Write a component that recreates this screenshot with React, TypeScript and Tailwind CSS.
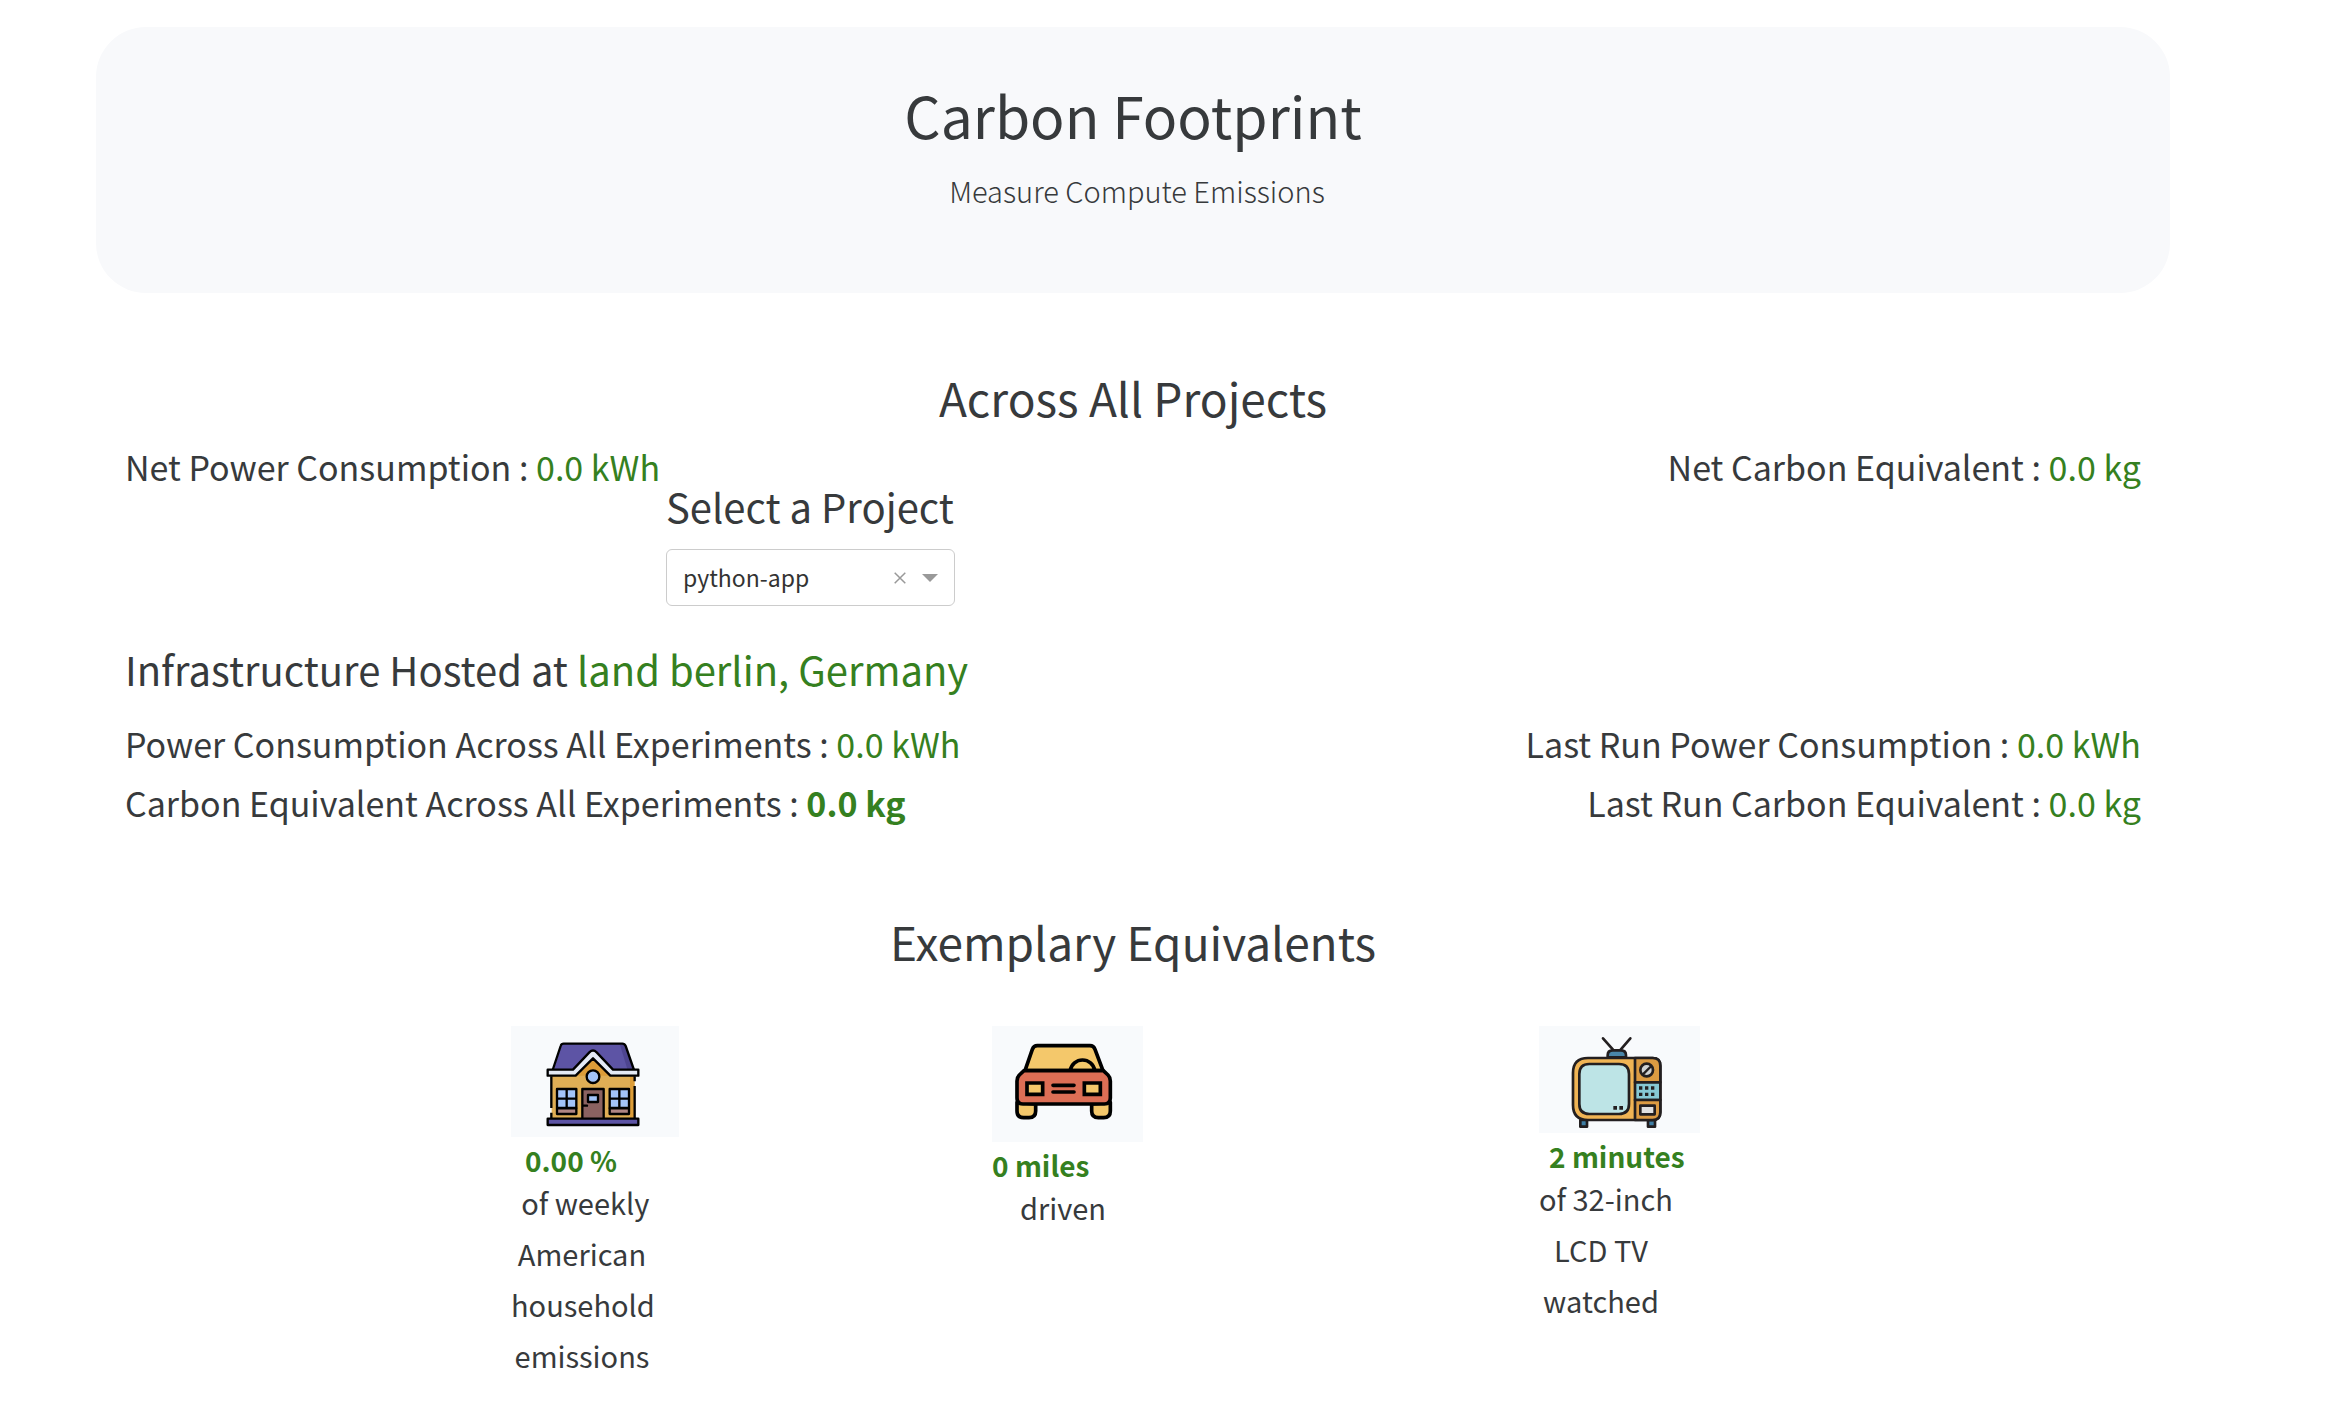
import { useState, type ReactNode } from "react";

function House() {
  return (
    <svg viewBox="33 33 504 333" className="block h-[111px] w-[168px] bg-[#f8fafc]" role="img" aria-label="House">
      <g stroke="#000" strokeWidth="7" strokeLinejoin="round" strokeLinecap="butt">
        <path d="M155 180H404V312H155Z" fill="#dfae55" stroke="none" />
        <path d="M390 184h13v126h-13z" fill="#dd9d38" stroke="none" />
        <path d="M160 165L184 92Q186 86 192 86H366Q373 86 375 92L402 165H335L279 107L223 165Z" fill="#5d54a5" stroke="none" />
        <path d="M360 90H372L398 162H382Z" fill="#4e4590" stroke="none" />
        <path d="M222 182L279 128L336 182Z" fill="#dd9d38" stroke="none" />
        <path d="M158 165L182 93Q184 86 191 86H367Q374 86 377 93L402 165" fill="none" />
        <path d="M143 164H219L268 112Q279 101 290 112L339 164H415V182H331L279 130L227 182H143Z" fill="#e4eaf5" />
        <path d="M154 184V279M154 293V311M404 184V199M404 213V311" fill="none" />
        <circle cx="279" cy="185" r="19" fill="#a3c4f9" />
        <path d="M247 311V222H311V311" fill="#8b6261" />
        <path d="M264 240H294V261H264Z" fill="#a3c4f9" />
        <path d="M250 272H261" strokeLinecap="round" />
        <path d="M171 222H229V279H171Z M329 222H387V279H329Z" fill="#a3c4f9" />
        <path d="M200 222V279M171 251H229M358 222V279M329 251H387" />
        <path d="M171 280H229V297H171Z M329 280H387V297H329Z" fill="#b08684" />
        <path d="M143 311H415V330H143Z" fill="#5d54a5" />
      </g>
    </svg>
  );
}

function Car() {
  return (
    <svg viewBox="36 33 453 348" className="block h-[116px] w-[151px] bg-[#f8fafc]" role="img" aria-label="Car">
      <g stroke="#000" strokeWidth="11" strokeLinejoin="round" strokeLinecap="round">
        <path d="M111 262V288Q111 308 131 308H147Q167 308 167 288V267Z" fill="#f4c86b" />
        <path d="M335 267V288Q335 308 355 308H371Q391 308 391 288V262Z" fill="#f4c86b" />
        <path d="M135 167L157 103Q161 92 172 92H330Q341 92 345 103L369 167Z" fill="#f4c86b" />
        <path d="M271 166A37 37 0 0 1 344 166" fill="none" />
        <path d="M132 167H370L384 180Q391 187 391 198V249Q391 267 373 267H129Q111 267 111 249V198Q111 187 118 180Z" fill="#dc6e55" />
        <path d="M141 204H188V238H141Z M313 204H361V238H313Z" fill="#f4c86b" strokeLinejoin="miter" />
        <path d="M219 211H282M219 231H282" fill="none" />
      </g>
    </svg>
  );
}

function Television() {
  return (
    <svg viewBox="57 33 483 321" className="block h-[107px] w-[161px] bg-[#f8fafc]" role="img" aria-label="Television">
      <g stroke="#231f20" strokeWidth="8" strokeLinejoin="round" strokeLinecap="round">
        <path d="M249 70L279 104M331 70L302 104" fill="none" />
        <path d="M263 127V121Q263 106 278 106H303Q318 106 318 121V127Z" fill="#4a86a8" />
        <path d="M181 315H201V335H181Z M384 315H405V335H384Z" fill="#3f7fa5" />
        <path d="M204 129H398Q421 129 421 152V292Q421 315 398 315H204Q159 315 159 270V174Q159 129 204 129Z" fill="#f0b454" />
        <path d="M345 129H398Q421 129 421 152V202H345Z" fill="#dc9b42" />
        <path d="M345 202H421V255H345Z" fill="#86c8d4" />
        <path d="M345 255H421V292Q421 315 398 315H345Z" fill="#dc9b42" />
        <path d="M208 147H297Q327 147 327 177V267Q327 297 297 297H208Q178 297 178 267V177Q178 147 208 147Z" fill="#bde4e6" />
        <circle cx="380" cy="165" r="19" fill="#d0d2d3" />
        <path d="M371 176L391 156" strokeWidth="7" />
        <path d="M361 272H404V298H361Z" fill="#e0e0e0" />
      </g>
      <path
        d="M280 273h11v11h-11zM298 273h11v11h-11zM357 214h10v10h-10zM375 214h10v10h-10zM393 214h10v10h-10zM357 233h10v10h-10zM375 233h10v10h-10zM393 233h10v10h-10z"
        fill="#231f20"
      />
    </svg>
  );
}

function Value({ children }: { children: ReactNode }) {
  return <span className="text-[#358020]">{children}</span>;
}

function Metric({ label, children }: { label: string; children: ReactNode }) {
  return (
    <p className="whitespace-nowrap text-[34px] leading-[59px]">
      {label} : {children}
    </p>
  );
}

function ProjectSelect() {
  const [project, setProject] = useState("python-app");
  return (
    <div className="mt-[45px] w-[289px]">
      <label htmlFor="project" className="block whitespace-nowrap text-[40px] leading-[48px]">
        Select a Project
      </label>
      <div className="mt-[19px] flex h-[57px] items-center rounded-md border border-[#cccccc] bg-white pr-4">
        <select
          id="project"
          value={project}
          onChange={(e) => setProject(e.target.value)}
          className="h-full min-w-0 flex-1 appearance-none bg-transparent pl-4 text-[23px] text-[#333333] outline-none"
        >
          <option value="">Select...</option>
          <option value="python-app">python-app</option>
        </select>
        <button type="button" aria-label="Clear project" onClick={() => setProject("")} className="mr-4">
          <svg viewBox="0 0 12 12" className="block size-3" stroke="#999999" strokeWidth="1.5" fill="none">
            <path d="M.7 .7L11.3 11.3M11.3 .7L.7 11.3" />
          </svg>
        </button>
        <svg viewBox="0 0 16 8" className="block h-2 w-4" fill="#999999" aria-hidden="true">
          <path d="M0 0H16L8 8Z" />
        </svg>
      </div>
    </div>
  );
}

function Equivalent({
  icon,
  value,
  indent = "",
  width = "w-[142px]",
  lines,
}: {
  icon: ReactNode;
  value: string;
  indent?: string;
  width?: string;
  lines: string[];
}) {
  return (
    <div>
      {icon}
      <strong className={`mt-[7px] block whitespace-nowrap text-[28px] leading-[33px] font-bold text-[#358020] ${indent}`}>
        {value}
      </strong>
      <p className={`text-center text-[29px] leading-[51px] ${width}`}>
        {lines.map((line) => (
          <span key={line} className="block whitespace-pre">
            {line}
          </span>
        ))}
      </p>
    </div>
  );
}

export default function App() {
  return (
    <main className="min-h-screen bg-white pt-[27px] pr-[156px] pl-24 font-['Noto_Sans_CJK_SC',sans-serif] text-[#373a3c]">
      <header className="rounded-[50px] bg-[#f8f9fb] pt-[52px] pb-[82px] text-center">
        <h1 className="text-[57px] leading-[70px]">Carbon Footprint</h1>
        <p className="mt-5 pl-2 text-[29px] leading-[42px] font-light">Measure Compute Emissions</p>
      </header>

      <section className="px-[29px]">
        <h2 className="mt-[74px] text-center text-[46px] leading-[60px]">Across All Projects</h2>
        <div className="mt-[10px] flex items-start">
          <div className="w-[541px] shrink-0">
            <Metric label="Net Power Consumption">
              <Value>0.0 kWh</Value>
            </Metric>
          </div>
          <ProjectSelect />
          <div className="ml-auto">
            <Metric label="Net Carbon Equivalent">
              <Value>0.0 kg</Value>
            </Metric>
          </div>
        </div>
      </section>

      <section className="px-[29px]">
        <h3 className="mt-[39px] text-[40px] leading-[48px]">
          Infrastructure Hosted at <Value>land berlin, Germany</Value>
        </h3>
        <div className="mt-[21px] flex justify-between">
          <div>
            <Metric label="Power Consumption Across All Experiments">
              <Value>0.0 kWh</Value>
            </Metric>
            <Metric label="Carbon Equivalent Across All Experiments">
              <strong className="font-bold text-[#358020]">0.0 kg</strong>
            </Metric>
          </div>
          <div className="text-right">
            <Metric label="Last Run Power Consumption">
              <Value>0.0 kWh</Value>
            </Metric>
            <Metric label="Last Run Carbon Equivalent">
              <Value>0.0 kg</Value>
            </Metric>
          </div>
        </div>
      </section>

      <section>
        <h2 className="mt-[79px] text-center text-[46px] leading-[60px]">Exemplary Equivalents</h2>
        <div className="mt-[55px] grid grid-cols-[415fr_481fr_547fr_631fr]">
          <div />
          <Equivalent
            icon={<House />}
            value="0.00 %"
            indent="pl-3.5"
            lines={[" of weekly", "American", "household", "emissions"]}
          />
          <Equivalent icon={<Car />} value="0 miles" lines={["driven"]} />
          <Equivalent
            icon={<Television />}
            value="2 minutes"
            indent="pl-2.5"
            width="w-[124px]"
            lines={["of 32-inch", "LCD TV", "watched"]}
          />
        </div>
      </section>
    </main>
  );
}
